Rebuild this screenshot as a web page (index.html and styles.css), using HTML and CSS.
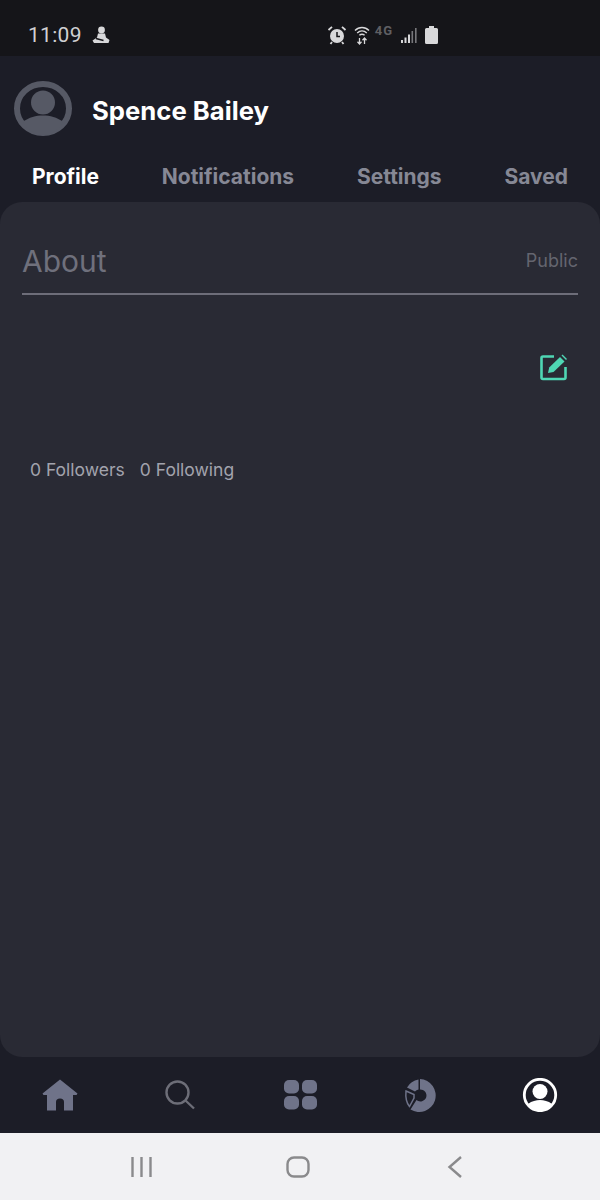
FILE: index.html
```html
<!DOCTYPE html>
<html lang="en">
<head>
<meta charset="UTF-8">
<meta name="viewport" content="width=device-width, initial-scale=1.0">
<title>Profile</title>
<link rel="stylesheet" href="styles.css">
</head>
<body>

<div class="app">
  <div class="status-bar">
    <span class="time">11:09</span>
    <svg class="status-person" width="18" height="18" viewBox="0 0 18 18">
      <circle cx="9.5" cy="4" r="3.4" fill="#d8d8da"/>
      <path d="M6 7.500h7l1 4 3.500 2.500-1 3H2l-1.500-2.500L5 11.500z" fill="#d8d8da"/>
      <path d="M4 12.500l7.500 2" stroke="#151519" stroke-width="1.300"/>
    </svg>
    <div class="status-icons">
      <svg width="20" height="20" viewBox="0 0 20 20">
        <circle cx="10" cy="11" r="7" fill="#d8d8da"/>
        <path d="M10 7v4.500h3" fill="none" stroke="#151519" stroke-width="1.500"/>
        <path d="M1.500 5L5 1.800M18.500 5L15 1.800M5 17l-1.500 2M15 17l1.500 2" stroke="#d8d8da" stroke-width="1.800"/>
      </svg>
      <svg class="wifi" width="16" height="20" viewBox="0 0 16 20">
        <path d="M1 5.500c4-4 10-4 14 0M3.200 8c2.800-2.600 6.800-2.600 9.600 0M5.400 10.300c1.500-1.300 3.700-1.300 5.200 0" fill="none" stroke="#d8d8da" stroke-width="1.400"/>
        <path d="M5.500 13v6M3.500 16.800l2 2.200 2-2.200M10.500 19v-6M8.500 15.200l2-2.200 2 2.200" fill="none" stroke="#d8d8da" stroke-width="1.300"/>
      </svg>
      <span class="net">4G</span>
      <svg class="signal" width="16" height="17" viewBox="0 0 16 17">
        <rect x="0" y="13" width="2" height="3" fill="#d8d8da"/>
        <rect x="3.500" y="10.500" width="2" height="5.500" fill="#d8d8da"/>
        <rect x="7" y="7.500" width="2" height="8.500" fill="#d8d8da"/>
        <rect x="10.500" y="4" width="1.600" height="12" fill="#77777b"/>
        <rect x="14" y="1" width="1.600" height="15" fill="#77777b"/>
      </svg>
      <svg class="battery" width="13" height="18" viewBox="0 0 13 18">
        <path d="M4 0h5v2h2.500q1.500 0 1.500 1.500v13q0 1.500-1.500 1.500h-10Q0 18 0 16.500v-13Q0 2 1.500 2H4z" fill="#d8d8da"/>
      </svg>
    </div>
  </div>

  <div class="profile-row">
    <svg class="avatar" width="58" height="55" viewBox="0 0 58 55">
      <ellipse cx="29" cy="27.500" rx="26" ry="24.500" fill="none" stroke="#565965" stroke-width="6"/>
      <circle cx="29" cy="21.500" r="12" fill="#565965"/>
      <path d="M9 41c6-5 13-6.500 20-6.500S43 36 49 41c-4 8-12 13-20 13S13 49 9 41z" fill="#565965"/>
    </svg>
    <span class="user-name">Spence Bailey</span>
  </div>

  <div class="tabs">
    <a class="tab active" href="#">Profile</a>
    <a class="tab" href="#">Notifications</a>
    <a class="tab" href="#">Settings</a>
    <a class="tab" href="#">Saved</a>
  </div>

  <div class="panel">
    <div class="about-head">
      <span class="about-title">About</span>
      <span class="about-public">Public</span>
    </div>
    <div class="edit-row">
      <svg width="28" height="27" viewBox="0 0 28 27">
        <path d="M14 2.500H3q-1.500 0-1.500 1.500v19.500q0 1.500 1.500 1.500h21q1.500 0 1.500-1.500V13" fill="none" stroke="#4fd6b4" stroke-width="2.600"/>
        <path d="M8 19l1.200-5.500L20 3l4.500 4.500L13.500 18z" fill="#4fd6b4"/>
        <path d="M21.500 1.500l1-1 4.500 4.500-1 1z" fill="#4fd6b4"/>
      </svg>
    </div>
    <div class="follow-row">
      <span>0 Followers</span>
      <span>0 Following</span>
    </div>
  </div>

  <div class="bottom-nav">
    <svg width="36" height="32" viewBox="0 0 36 32">
      <path fill-rule="evenodd" d="M18 0.500L35.500 14.500l-1 1.500H31v15.500H22V23q0-3.500-4-3.500T14 23v8.500H5V16H1.500l-1-1.500z" fill="#6f7389"/>
    </svg>
    <svg width="30" height="30" viewBox="0 0 30 30">
      <circle cx="12.500" cy="12.500" r="11" fill="none" stroke="#6d6e78" stroke-width="2.400"/>
      <path d="M20.500 20.500L29 28.500" stroke="#6d6e78" stroke-width="2.400"/>
    </svg>
    <svg width="33" height="30" viewBox="0 0 33 30">
      <rect x="0" y="0" width="15" height="13.500" rx="5" fill="#6f7389"/>
      <rect x="18" y="0" width="15" height="13.500" rx="5" fill="#6f7389"/>
      <rect x="0" y="16" width="15" height="13.500" rx="5" fill="#6f7389"/>
      <rect x="18" y="16" width="15" height="13.500" rx="5" fill="#6f7389"/>
    </svg>
    <svg class="chart-icon" width="34" height="33" viewBox="0 0 34 33">
      <path fill-rule="evenodd" d="M16 0a16.500 16.500 0 1 1-9.500 30.500L12.500 21a6 6 0 1 0 3.500-10.500zM14.500 0.500V10.500a6 6 0 0 0-3.500 2L3 8.500A16.500 16.500 0 0 1 14.500 0.500z" fill="#6f7389"/>
      <path d="M2 12l8 3.500 0 3.500-4.500 8.500Q1 22 2 12z" fill="none" stroke="#6f7389" stroke-width="1.500"/>
    </svg>
    <svg width="36" height="34" viewBox="0 0 36 34">
      <circle cx="18" cy="17" r="15.700" fill="none" stroke="#fff" stroke-width="2.800"/>
      <circle cx="18" cy="13.500" r="7.500" fill="#fff"/>
      <path d="M6 26c4-3 8-4 12-4s8 1 12 4c-3 4.500-7.500 7-12 7S9 30.500 6 26z" fill="#fff"/>
    </svg>
  </div>

  <div class="system-nav">
    <svg width="24" height="22" viewBox="0 0 24 22">
      <path d="M2.500 1v20M11.500 1v20M20.500 1v20" stroke="#8a8a8c" stroke-width="2.400"/>
    </svg>
    <svg class="sys-home" width="24" height="22" viewBox="0 0 24 22">
      <rect x="1.500" y="1.500" width="21" height="19" rx="6.500" fill="none" stroke="#8a8a8c" stroke-width="2.400"/>
    </svg>
    <svg class="sys-back" width="16" height="22" viewBox="0 0 16 22">
      <path d="M14 1L2.500 11 14 21" fill="none" stroke="#8a8a8c" stroke-width="2.400"/>
    </svg>
  </div>
</div>

</body>
</html>
```

FILE: styles.css
```css
/* Global Styles */
body {
  font-family: Inter, Roboto, "Liberation Sans", sans-serif;
  background-color: #1c1d27;
  margin: 0;
  padding: 0;
}
a {
  text-decoration: none;
}
svg {
  display: block;
}
.app {
  display: flex;
  flex-direction: column;
  width: 600px;
  height: 1200px;
  overflow: hidden;
}

/* Status bar */
.status-bar {
  display: flex;
  align-items: center;
  height: 56px;
  padding: 14px 0 0 28px;
  box-sizing: border-box;
  background-color: #151519;
  color: #d0d0d2;
}
.time {
  font-family: Roboto, sans-serif;
  font-size: 21px;
  letter-spacing: 0.3px;
}
.status-person {
  margin-left: 10px;
}
.status-icons {
  display: flex;
  align-items: center;
  margin-left: 217px;
}
.wifi {
  margin-left: 7px;
}
.net {
  width: 23px;
  font-family: Roboto, sans-serif;
  font-size: 13px;
  font-weight: 700;
  line-height: 10px;
  letter-spacing: 1px;
  color: #5f5f63;
  margin: -8px 0 0 5px;
}
.signal {
  margin-left: 3px;
}
.battery {
  margin-left: 8px;
}

/* Name + tabs */
.profile-row {
  display: flex;
  align-items: center;
  height: 56px;
  margin-top: 24px;
  padding-left: 14px;
}
.user-name {
  color: #fff;
  font-size: 25.7px;
  font-weight: 700;
  margin: 5px 0 0 20px;
}
.tabs {
  display: flex;
  justify-content: space-between;
  align-items: center;
  height: 66px;
  padding: 14px 32px 0 32px;
  box-sizing: border-box;
}
.tab {
  color: #868895;
  font-size: 21px;
  font-weight: 700;
}
.tab.active {
  color: #fff;
}

/* Main panel */
.panel {
  flex: 1;
  background-color: #292a34;
  border-radius: 22px;
  padding: 0 22px;
}
.about-head {
  display: flex;
  justify-content: space-between;
  align-items: center;
  height: 93px;
  padding-top: 26px;
  box-sizing: border-box;
  border-bottom: 2px solid #6d6d79;
}
.about-title {
  color: #6f707c;
  font-size: 30px;
}
.about-public {
  color: #64656f;
  font-size: 18px;
}
.edit-row {
  display: flex;
  justify-content: flex-end;
  padding: 59px 10px 0 0;
}
.follow-row {
  display: flex;
  gap: 15px;
  margin-top: 78px;
  padding-left: 8px;
  color: #a2a3ad;
  font-size: 17.5px;
}

/* Bottom nav */
.bottom-nav {
  display: grid;
  grid-template-columns: repeat(5, 120px);
  justify-items: center;
  align-items: center;
  height: 76px;
}
.chart-icon {
  margin-left: 2px;
}
.system-nav {
  display: flex;
  align-items: center;
  height: 67px;
  padding-left: 130px;
  background-color: #f1f1f3;
}
.sys-home {
  margin-left: 132px;
}
.sys-back {
  margin-left: 137px;
}
```
